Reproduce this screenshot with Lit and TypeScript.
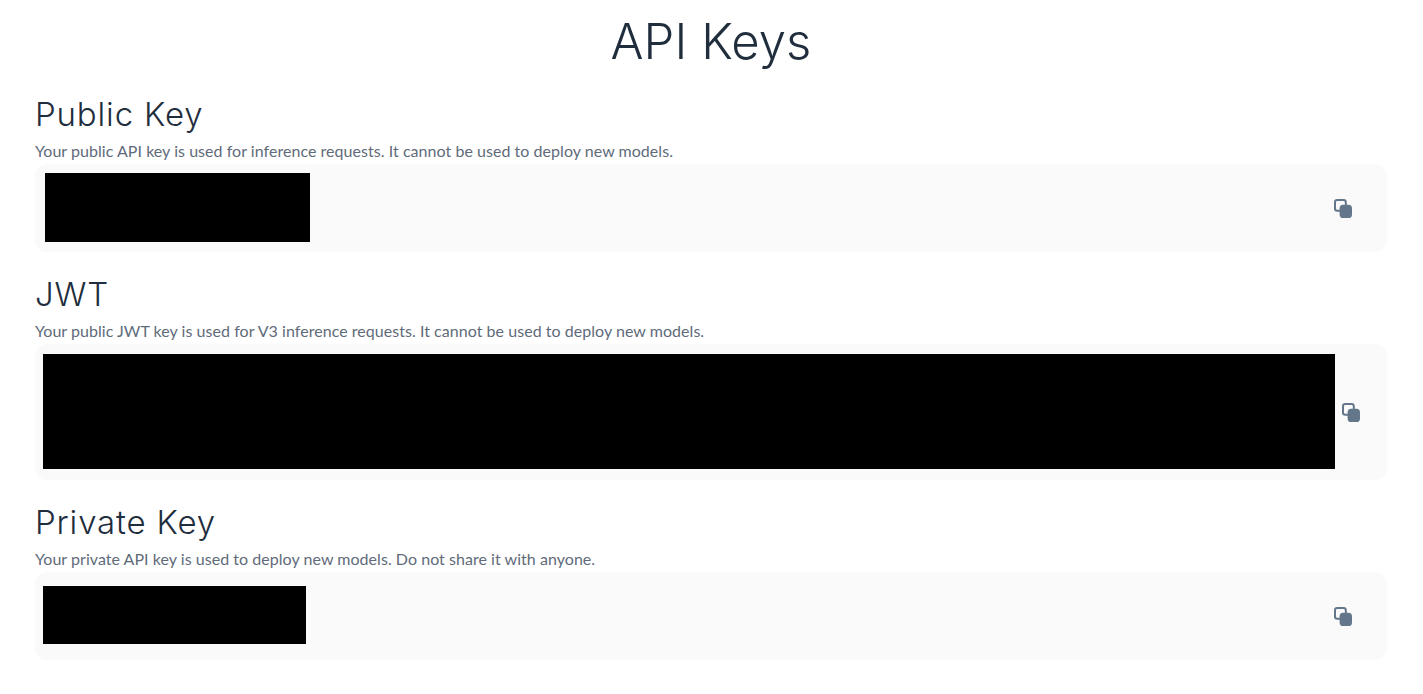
import { LitElement, html, css } from "lit";
import { customElement } from "lit/decorators.js";

const copyIcon = html`<svg class="icon" viewBox="0 0 18 19" aria-hidden="true">
  <rect x="1" y="1" width="10.8" height="10.8" rx="2.2" fill="none" stroke="currentColor" stroke-width="2"></rect>
  <rect x="5.6" y="5.8" width="12.4" height="13.2" rx="3.6" fill="currentColor"></rect>
</svg>`;

@customElement("app-root")
export class AppRoot extends LitElement {
  static styles = css`
    :host { display: block; background: #fff; min-height: 694px; padding: 0 36px 0 35px; box-sizing: border-box; }
    h1 { margin: 0; padding-top: 12px; height: 76px; box-sizing: border-box; font: 300 49px/60px Inter, sans-serif; letter-spacing: 0.1px; color: #1f2d3d; text-align: center; }
    h2 { margin: 0 0 4px; font: 300 33px/44px Inter, sans-serif; letter-spacing: 0.85px; color: #1f2d3d; }
    p { margin: 0; font: 400 16px/22px Lato, sans-serif; letter-spacing: 0.04px; color: #5f6b7a; }
    .head-1 { padding-top: 16px; }
    .head-2 { padding-top: 20px; }
    .head-3 { padding-top: 20px; }
    .card { display: flex; align-items: center; justify-content: space-between; margin-top: 2px; background: #fafafa; border-radius: 12px; }
    .redact { background: #000; flex: none; }
    .icon { width: 18px; height: 19px; margin-top: 2px; color: #64768a; flex: none; display: block; }
    .c1 { padding: 9px 35px 10px 10px; }
    .c1 .redact { width: 265px; height: 69px; }
    .c2 { padding: 10px 27px 11px 8px; }
    .c2 .redact { width: 1292px; height: 115px; }
    .c3 { padding: 14px 35px 16px 8px; }
    .c3 .redact { width: 263px; height: 58px; }
  `;

  render() {
    return html`
      <h1>API Keys</h1>
      <section>
        <div class="head-1"><h2>Public Key</h2><p>Your public API key is used for inference requests. It cannot be used to deploy new models.</p></div>
        <div class="card c1"><div class="redact"></div>${copyIcon}</div>
      </section>
      <section>
        <div class="head-2"><h2>JWT</h2><p>Your public JWT key is used for V3 inference requests. It cannot be used to deploy new models.</p></div>
        <div class="card c2"><div class="redact"></div>${copyIcon}</div>
      </section>
      <section>
        <div class="head-3"><h2>Private Key</h2><p>Your private API key is used to deploy new models. Do not share it with anyone.</p></div>
        <div class="card c3"><div class="redact"></div>${copyIcon}</div>
      </section>
    `;
  }
}
